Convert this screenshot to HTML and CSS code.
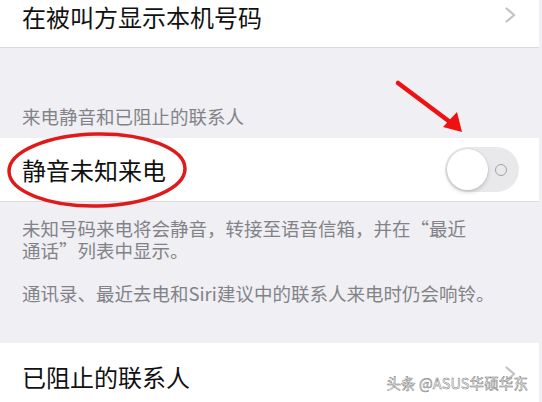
FILE: index.html
```html
<!DOCTYPE html>
<html lang="zh-CN">
<head>
<meta charset="utf-8">
<link rel="stylesheet" href="styles.css">
</head>
<body>
<div class="page">
  <div class="cell cell-first">
    <span class="label">在被叫方显示本机号码</span>
    <svg class="chev" width="11" height="16" viewBox="0 0 11 16"><polyline points="1.5,1.5 9.2,8 1.5,14.5" fill="none" stroke="#c4c4c8" stroke-width="2.2" stroke-linecap="round" stroke-linejoin="round"/></svg>
  </div>
  <div class="header">来电静音和已阻止的联系人</div>
  <div class="cell cell-toggle">
    <span class="label">静音未知来电</span>
    <div class="toggle"><div class="knob"></div><div class="off-mark"></div></div>
  </div>
  <div class="notes">
    <p class="note">未知号码来电将会静音，转接至语音信箱，并在“最近<br>通话”列表中显示。</p>
    <p class="note note-second">通讯录、最近去电和Siri建议中的联系人来电时仍会响铃。</p>
  </div>
  <div class="cell cell-last">
    <span class="label">已阻止的联系人</span>
    <svg class="chev" width="11" height="16" viewBox="0 0 11 16"><polyline points="1.5,1.5 9.2,8 1.5,14.5" fill="none" stroke="#c4c4c8" stroke-width="2.2" stroke-linecap="round" stroke-linejoin="round"/></svg>
  </div>

  <svg class="annot" width="542" height="402" viewBox="0 0 542 402">
    <ellipse cx="97" cy="170" rx="88" ry="36" fill="none" stroke="#e01a1a" stroke-width="3.5" transform="rotate(-1 97 170)"/>
    <line x1="398" y1="83" x2="450" y2="122" stroke="#ee1111" stroke-width="4.5" stroke-linecap="round"/>
    <polygon points="462,132 443,127 457,112" fill="#ee1111"/>
  </svg>
  <div class="watermark">头条 @ASUS华硕华东</div>
</div>
</body>
</html>
```
FILE: styles.css
```css
html, body {
  margin: 0;
  padding: 0;
}
body {
  background: #efeff4;
  font-family: "Noto Sans CJK SC", "Noto Sans", sans-serif;
  width: 542px;
  height: 402px;
  overflow: hidden;
}
.page {
  position: relative;
  width: 542px;
  height: 402px;
  overflow: hidden;
}
.cell {
  display: flex;
  align-items: center;
  justify-content: space-between;
  background: #fff;
  margin-right: 3px;
  padding: 0 23px 0 22px;
  box-sizing: border-box;
}
.label {
  font-size: 24px;
  line-height: 30px;
  color: #111;
}
.cell-first {
  margin-top: -16px;
  height: 64px;
  border-bottom: 1px solid #d9d9dd;
}
.cell-first .label {
  margin-top: 2px;
}
.cell-first .chev {
  margin-top: -2px;
}
.header {
  padding: 56px 22px 10px;
  font-size: 18.5px;
  line-height: 24px;
  color: #838387;
}
.cell-toggle {
  height: 64px;
  border-bottom: 1px solid #dcdce0;
  padding-right: 20px;
}
.toggle {
  width: 74px;
  height: 45px;
  border-radius: 23px;
  background: #e9e9eb;
  display: flex;
  align-items: center;
  padding: 2px;
  box-sizing: border-box;
}
.knob {
  width: 41px;
  height: 41px;
  border-radius: 50%;
  background: #fff;
  box-shadow: 0 2px 4px rgba(0,0,0,0.18), 0 0 0 0.5px rgba(0,0,0,0.06);
}
.off-mark {
  width: 10px;
  height: 10px;
  border: 1.6px solid #a2a2a6;
  border-radius: 50%;
  margin-left: auto;
  margin-right: 10px;
}
.notes {
  padding: 15px 22px 39px;
}
.note {
  margin: 0;
  font-size: 18.5px;
  line-height: 22px;
  color: #838387;
}
.note-second {
  margin-top: 21px;
}
.cell-last {
  height: 70px;
}
.cell-last .label {
  margin-top: -3px;
}
.cell-last .chev {
  margin-top: -8px;
}
.annot {
  position: absolute;
  left: 0;
  top: 0;
  pointer-events: none;
}
.watermark {
  position: absolute;
  right: 14px;
  bottom: 11px;
  font-size: 14.5px;
  line-height: 16px;
  color: #fff;
  -webkit-text-stroke: 0.5px #777;
  letter-spacing: 0.1px;
}
```
